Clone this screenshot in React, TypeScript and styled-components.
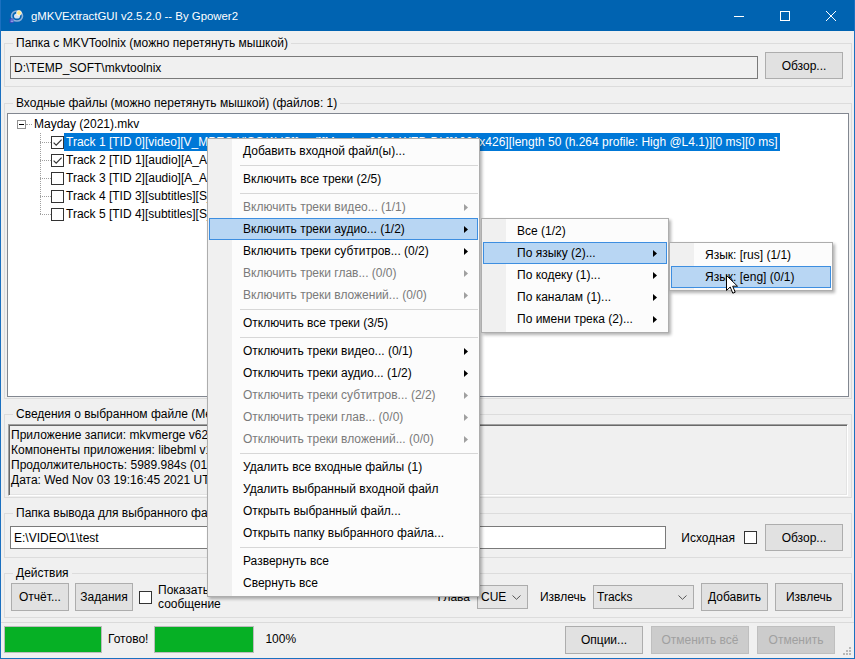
import React from 'react';
import styled, { createGlobalStyle } from 'styled-components';

const GlobalStyle = createGlobalStyle`
  * { box-sizing: border-box; }
  html, body { margin: 0; padding: 0; }
  body {
    font-family: "Liberation Sans", Arial, sans-serif;
    font-size: 12px;
    color: #000;
    background: #ffffff;
  }
`;

type MenuEntry =
  | 'sep'
  | { label: string; disabled?: boolean; sub?: boolean; active?: boolean };

const MAIN_MENU: MenuEntry[] = [
  { label: 'Добавить входной файл(ы)...' },
  'sep',
  { label: 'Включить все треки (2/5)' },
  'sep',
  { label: 'Включить треки видео... (1/1)', disabled: true, sub: true },
  { label: 'Включить треки аудио... (1/2)', sub: true, active: true },
  { label: 'Включить треки субтитров... (0/2)', sub: true },
  { label: 'Включить треки глав... (0/0)', disabled: true, sub: true },
  { label: 'Включить треки вложений... (0/0)', disabled: true, sub: true },
  'sep',
  { label: 'Отключить все треки (3/5)' },
  'sep',
  { label: 'Отключить треки видео... (0/1)', sub: true },
  { label: 'Отключить треки аудио... (1/2)', sub: true },
  { label: 'Отключить треки субтитров... (2/2)', disabled: true, sub: true },
  { label: 'Отключить треки глав... (0/0)', disabled: true, sub: true },
  { label: 'Отключить треки вложений... (0/0)', disabled: true, sub: true },
  'sep',
  { label: 'Удалить все входные файлы (1)' },
  { label: 'Удалить выбранный входной файл' },
  { label: 'Открыть выбранный файл...' },
  { label: 'Открыть папку выбранного файла...' },
  'sep',
  { label: 'Развернуть все' },
  { label: 'Свернуть все' },
];

const AUDIO_MENU: MenuEntry[] = [
  { label: 'Все (1/2)' },
  { label: 'По языку (2)...', sub: true, active: true },
  { label: 'По кодеку (1)...', sub: true },
  { label: 'По каналам (1)...', sub: true },
  { label: 'По имени трека (2)...', sub: true },
];

const LANG_MENU: MenuEntry[] = [
  { label: 'Язык: [rus] (1/1)' },
  { label: 'Язык: [eng] (0/1)', active: true },
];

const TRACKS = [
  {
    label:
      'Track 1 [TID 0][video][V_MPEG4/ISO/AVC][und][Mayday.2021.WEB-DL][1024x426][length 50 (h.264 profile: High @L4.1)][0 ms][0 ms]',
    checked: true,
    selected: true,
  },
  { label: 'Track 2 [TID 1][audio][A_AC3][rus][48000 Hz][6 ch][0 ms][0 ms]', checked: true },
  { label: 'Track 3 [TID 2][audio][A_AC3][eng][48000 Hz][6 ch][0 ms][0 ms]', checked: false },
  { label: 'Track 4 [TID 3][subtitles][S_TEXT/UTF8][rus][0 ms][0 ms]', checked: false },
  { label: 'Track 5 [TID 4][subtitles][S_TEXT/UTF8][eng][0 ms][0 ms]', checked: false },
];

const INFO_LINES = [
  "Приложение записи: mkvmerge v62.0.0 ('Apollo') 64-bit",
  'Компоненты приложения: libebml v1.4.2 + libmatroska v1.6.4',
  'Продолжительность: 5989.984s (01:39:49.984)',
  'Дата: Wed Nov 03 19:16:45 2021 UTC',
];

/* ---------- window chrome ---------- */

const Window = styled.div`
  position: relative;
  width: 855px;
  height: 659px;
  display: flex;
  flex-direction: column;
  background: #f0f0f0;
  border: 1px solid #1b70c0;
  border-top: 0;
  overflow: hidden;
`;

const TitleBar = styled.div`
  height: 31px;
  flex: none;
  display: flex;
  align-items: center;
  background: #0063b1;
  color: #fff;
  padding-left: 7px;
`;

const TitleText = styled.span`
  margin-left: 7px;
  font-size: 11.4px;
`;

const Controls = styled.div`
  margin-left: auto;
  display: flex;
  height: 100%;
`;

const ControlButton = styled.div`
  width: 46px;
  height: 100%;
  display: flex;
  align-items: center;
  justify-content: center;
`;

const Client = styled.div`
  display: flex;
  flex-direction: column;
  padding: 0 2px 0 3px;
`;

/* ---------- group boxes ---------- */

const Group = styled.fieldset<{ $mt: number }>`
  margin: ${(p) => p.$mt}px 0 0;
  padding: 0;
  min-width: 0;
  border: 1px solid #dcdcdc;
`;

const Legend = styled.legend`
  margin-left: 8px;
  padding: 0 3px;
  line-height: 15px;
  font-size: 12px;
  white-space: nowrap;
`;

const PathRow = styled.div`
  display: flex;
  align-items: flex-end;
  gap: 7px;
  padding: 1px 8px 7px 5px;
`;

const OutputRow = styled.div`
  display: flex;
  align-items: center;
  padding: 3px 8px 6px 5px;
`;

const ActionsRow = styled.div`
  display: flex;
  align-items: center;
  gap: 6px;
  padding: 2px 8px 6px 6px;
`;

const RightGroup = styled.div`
  margin-left: auto;
  display: flex;
  align-items: center;
  gap: 7px;
`;

const TextBox = styled.div<{ $grey?: boolean }>`
  flex: 1;
  min-width: 0;
  height: 23px;
  border: 1px solid #7a7a7a;
  background: ${(p) => (p.$grey ? '#f0f0f0' : '#ffffff')};
  display: flex;
  align-items: center;
  padding-left: 3px;
  white-space: nowrap;
  overflow: hidden;
`;

const Button = styled.button<{ $w: number; $h?: number; $disabled?: boolean }>`
  width: ${(p) => p.$w}px;
  height: ${(p) => p.$h ?? 27}px;
  flex: none;
  padding: 0;
  margin: 0;
  font: inherit;
  font-size: 12px;
  display: flex;
  align-items: center;
  justify-content: center;
  border: 1px solid ${(p) => (p.$disabled ? '#bfbfbf' : '#adadad')};
  background: ${(p) => (p.$disabled ? '#cccccc' : '#e1e1e1')};
  color: ${(p) => (p.$disabled ? '#a0a0a0' : '#000000')};
`;

const OutputButton = styled(Button)`
  margin-left: 8px;
`;

const FieldLabel = styled.span<{ $ml?: number }>`
  margin-left: ${(p) => p.$ml ?? 0}px;
  white-space: nowrap;
`;

const TwoLineLabel = styled.span`
  line-height: 13.5px;
  margin-top: 1px;
`;

const Combo = styled.div<{ $w: number }>`
  width: ${(p) => p.$w}px;
  height: 24px;
  flex: none;
  display: flex;
  align-items: center;
  justify-content: space-between;
  padding: 0 6px 0 3px;
  border: 1px solid #acacac;
  background: #e5e5e5;
`;

const Box = styled.span`
  width: 13px;
  height: 13px;
  flex: none;
  border: 1px solid #333333;
  background: #ffffff;
  display: inline-flex;
  align-items: center;
  justify-content: center;
`;

const OutputCheck = styled(Box)`
  margin-left: 9px;
`;

function CheckBox({ checked }: { checked?: boolean }) {
  return (
    <Box>
      {checked && (
        <svg width="11" height="11" viewBox="0 0 11 11">
          <path d="M1.6 5.6 L4.2 8.2 L9.6 2.6" fill="none" stroke="#333" strokeWidth="1.2" />
        </svg>
      )}
    </Box>
  );
}

function Chevron() {
  return (
    <svg width="9" height="5" viewBox="0 0 9 5">
      <path d="M0.5 0.5 L4.5 4.3 L8.5 0.5" fill="none" stroke="#555" strokeWidth="1" />
    </svg>
  );
}

/* ---------- tree ---------- */

const Tree = styled.div`
  height: 284px;
  background: #ffffff;
  border: 1px solid #828790;
  padding-top: 1px;
  overflow: hidden;
`;

const InsetWrap = styled.div<{ $pad: string }>`
  padding: ${(p) => p.$pad};
`;

const RootRow = styled.div`
  height: 18px;
  display: flex;
  align-items: center;
  padding-left: 9px;
`;

const Expander = styled.span`
  width: 9px;
  height: 9px;
  border: 1px solid #919191;
  background: #fff;
  display: inline-flex;
  align-items: center;
  justify-content: center;
  &::after {
    content: '';
    width: 5px;
    height: 1px;
    background: #000;
  }
`;

const HDots = styled.span<{ $w: number }>`
  width: ${(p) => p.$w}px;
  border-top: 1px dotted #a0a0a0;
  flex: none;
`;

const RootLabel = styled.span`
  padding-left: 1px;
  margin-left: 1px;
`;

const ChildList = styled.div`
  position: relative;
  padding-left: 32px;
  &::before {
    content: '';
    position: absolute;
    left: 32px;
    top: 0;
    bottom: 9px;
    border-left: 1px dotted #a0a0a0;
  }
`;

const TrackRow = styled.div`
  height: 18px;
  display: flex;
  align-items: center;
`;

const TrackLabel = styled.span<{ $selected?: boolean }>`
  height: 18px;
  line-height: 18px;
  padding: 0 2px;
  white-space: nowrap;
  background: ${(p) => (p.$selected ? '#0078d7' : 'transparent')};
  color: ${(p) => (p.$selected ? '#ffffff' : '#000000')};
`;

/* ---------- info ---------- */

const InfoBox = styled.div`
  height: 72px;
  background: #f0f0f0;
  border-style: solid;
  border-width: 1px;
  border-color: #a0a0a0 #ffffff #ffffff #a0a0a0;
  box-shadow: inset 1px 1px 0 #696969, inset -1px -1px 0 #e3e3e3;
  padding: 3px 0 0 2px;
  line-height: 15px;
  white-space: nowrap;
  overflow: hidden;
`;

/* ---------- status ---------- */

const StatusBar = styled.div`
  flex: 1;
  display: flex;
  align-items: flex-start;
  margin-top: 4px;
  padding: 3px 2px 0 3px;
  border-top: 1px solid #dadada;
`;

const Progress = styled.div<{ $w: number }>`
  width: ${(p) => p.$w}px;
  height: 27px;
  flex: none;
  border: 1px solid #bcbcbc;
  background: #06b025;
`;

const StatusText = styled.span<{ $ml: number }>`
  margin-left: ${(p) => p.$ml}px;
  margin-right: 6px;
  line-height: 27px;
  white-space: nowrap;
`;

const StatusButtons = styled.div`
  margin-left: auto;
  display: flex;
  gap: 8px;
`;

const Grip = styled.div`
  align-self: flex-end;
  margin: 0 0 2px 5px;
  display: flex;
`;

/* ---------- menus ---------- */

const MenuBox = styled.div<{ $x: number; $y: number; $w: number }>`
  position: absolute;
  left: ${(p) => p.$x}px;
  top: ${(p) => p.$y}px;
  width: ${(p) => p.$w}px;
  padding: 1px 1px 2px;
  border: 1px solid #adadad;
  background: linear-gradient(to right, #f0f0f0 0, #f0f0f0 24px, #fcfcfc 24px);
  box-shadow: 2px 2px 3px rgba(0, 0, 0, 0.3);
  z-index: 10;
`;

const MenuRow = styled.div<{ $active?: boolean; $disabled?: boolean }>`
  height: 22px;
  display: flex;
  align-items: center;
  padding: 0 9px 0 33px;
  border: 1px solid ${(p) => (p.$active ? '#3d8ee0' : 'transparent')};
  background: ${(p) => (p.$active ? '#b8d6f3' : 'transparent')};
  color: ${(p) => (p.$disabled ? '#7a7a7a' : '#000000')};
  white-space: nowrap;
`;

const MenuArrow = styled.svg`
  margin-left: auto;
`;

const MenuSep = styled.div`
  height: 6px;
  display: flex;
  align-items: center;
  padding-left: 31px;
  &::after {
    content: '';
    flex: 1;
    height: 1px;
    background: #d7d7d7;
  }
`;

const Cursor = styled.svg`
  position: absolute;
  left: 725px;
  top: 275px;
  z-index: 20;
`;

function PopupMenu({ x, y, w, items }: { x: number; y: number; w: number; items: MenuEntry[] }) {
  return (
    <MenuBox $x={x - 1} $y={y} $w={w}>
      {items.map((it, i) =>
        it === 'sep' ? (
          <MenuSep key={i} />
        ) : (
          <MenuRow key={i} $active={it.active} $disabled={it.disabled}>
            <span>{it.label}</span>
            {it.sub && (
              <MenuArrow width="4" height="7" viewBox="0 0 4 7">
                <path d="M0 0 L4 3.5 L0 7 Z" fill={it.disabled ? '#a0a0a0' : '#000'} />
              </MenuArrow>
            )}
          </MenuRow>
        ),
      )}
    </MenuBox>
  );
}

function AppIcon() {
  return (
    <svg width="16" height="16" viewBox="0 0 16 16">
      <ellipse cx="9" cy="8" rx="5.5" ry="5" fill="none" stroke="#8db0da" strokeWidth="1.6" />
      <ellipse cx="9" cy="8" rx="3" ry="2.6" fill="#d6e4f4" />
      <circle cx="11" cy="5" r="2.4" fill="#ffe680" stroke="#ffffff" strokeWidth="0.8" />
      <rect x="1.5" y="10.5" width="4" height="4.5" fill="#3343b8" />
      <rect x="2.6" y="11.6" width="2.9" height="0.9" fill="#9fb0f0" />
      <rect x="2.6" y="13.2" width="2.9" height="0.9" fill="#9fb0f0" />
    </svg>
  );
}

export default function App() {
  return (
    <>
      <GlobalStyle />
      <Window>
        <TitleBar>
          <AppIcon />
          <TitleText>gMKVExtractGUI v2.5.2.0 -- By Gpower2</TitleText>
          <Controls>
            <ControlButton>
              <svg width="10" height="10" viewBox="0 0 10 10">
                <path d="M0 5.5 H10" stroke="#fff" strokeWidth="1" />
              </svg>
            </ControlButton>
            <ControlButton>
              <svg width="10" height="10" viewBox="0 0 10 10">
                <rect x="0.5" y="0.5" width="9" height="9" fill="none" stroke="#fff" strokeWidth="1" />
              </svg>
            </ControlButton>
            <ControlButton>
              <svg width="10" height="10" viewBox="0 0 10 10">
                <path d="M0 0 L10 10 M10 0 L0 10" stroke="#fff" strokeWidth="1" />
              </svg>
            </ControlButton>
          </Controls>
        </TitleBar>

        <Client>
          <Group $mt={5}>
            <Legend>Папка с MKVToolnix (можно перетянуть мышкой)</Legend>
            <PathRow>
              <TextBox $grey>{'D:\\TEMP_SOFT\\mkvtoolnix'}</TextBox>
              <Button $w={78}>Обзор...</Button>
            </PathRow>
          </Group>

          <Group $mt={9}>
            <Legend>Входные файлы (можно перетянуть мышкой) (файлов: 1)</Legend>
            <InsetWrap $pad="2px 2px 1px 2px">
              <Tree>
                <RootRow>
                  <Expander />
                  <HDots $w={6} />
                  <RootLabel>Mayday (2021).mkv</RootLabel>
                </RootRow>
                <ChildList>
                  {TRACKS.map((t) => (
                    <TrackRow key={t.label}>
                      <HDots $w={11} />
                      <CheckBox checked={t.checked} />
                      <TrackLabel $selected={t.selected}>{t.label}</TrackLabel>
                    </TrackRow>
                  ))}
                </ChildList>
              </Tree>
            </InsetWrap>
          </Group>

          <Group $mt={8}>
            <Legend>Сведения о выбранном файле (MediaInfo)</Legend>
            <InsetWrap $pad="2px 3px 1px 3px">
              <InfoBox>
                {INFO_LINES.map((l) => (
                  <div key={l}>{l}</div>
                ))}
              </InfoBox>
            </InsetWrap>
          </Group>

          <Group $mt={8}>
            <Legend>Папка вывода для выбранного файла</Legend>
            <OutputRow>
              <TextBox>{'E:\\VIDEO\\1\\test'}</TextBox>
              <FieldLabel $ml={15}>Исходная</FieldLabel>
              <OutputCheck />
              <OutputButton $w={78}>Обзор...</OutputButton>
            </OutputRow>
          </Group>

          <Group $mt={8}>
            <Legend>Действия</Legend>
            <ActionsRow>
              <Button $w={58} $h={28}>
                Отчёт...
              </Button>
              <Button $w={58} $h={28}>
                Задания
              </Button>
              <CheckBox />
              <TwoLineLabel>
                Показать
                <br />
                сообщение
              </TwoLineLabel>
              <RightGroup>
                <FieldLabel>Глава</FieldLabel>
                <Combo $w={51}>
                  <span>CUE</span>
                  <Chevron />
                </Combo>
                <FieldLabel $ml={5}>Извлечь</FieldLabel>
                <Combo $w={101}>
                  <span>Tracks</span>
                  <Chevron />
                </Combo>
                <Button $w={67} $h={28}>
                  Добавить
                </Button>
                <Button $w={68} $h={28}>
                  Извлечь
                </Button>
              </RightGroup>
            </ActionsRow>
          </Group>
        </Client>

        <StatusBar>
          <Progress $w={98} />
          <StatusText $ml={6}>Готово!</StatusText>
          <Progress $w={100} />
          <StatusText $ml={11}>100%</StatusText>
          <StatusButtons>
            <Button $w={78} $h={28}>
              Опции...
            </Button>
            <Button $w={98} $h={28} $disabled>
              Отменить всё
            </Button>
            <Button $w={78} $h={28} $disabled>
              Отменить
            </Button>
          </StatusButtons>
          <Grip>
            <svg width="12" height="12" viewBox="0 0 12 12">
              {[
                [9, 1],
                [6, 4],
                [9, 4],
                [3, 7],
                [6, 7],
                [9, 7],
              ].map(([cx, cy]) => (
                <rect key={`${cx}-${cy}`} x={cx} y={cy + 2} width="2" height="2" fill="#b8b8b8" />
              ))}
            </svg>
          </Grip>
        </StatusBar>

        <PopupMenu x={207} y={138} w={273} items={MAIN_MENU} />
        <PopupMenu x={481} y={218} w={188} items={AUDIO_MENU} />
        <PopupMenu x={669} y={242} w={164} items={LANG_MENU} />
        <Cursor width="13" height="20" viewBox="0 0 13 20">
          <path
            d="M0.5 0.5 L0.5 15.5 L4.2 12 L6.8 18.2 L9.2 17.2 L6.7 11.2 L11.5 11.2 Z"
            fill="#ffffff"
            stroke="#000000"
            strokeWidth="1"
            strokeLinejoin="round"
          />
        </Cursor>
      </Window>
    </>
  );
}
